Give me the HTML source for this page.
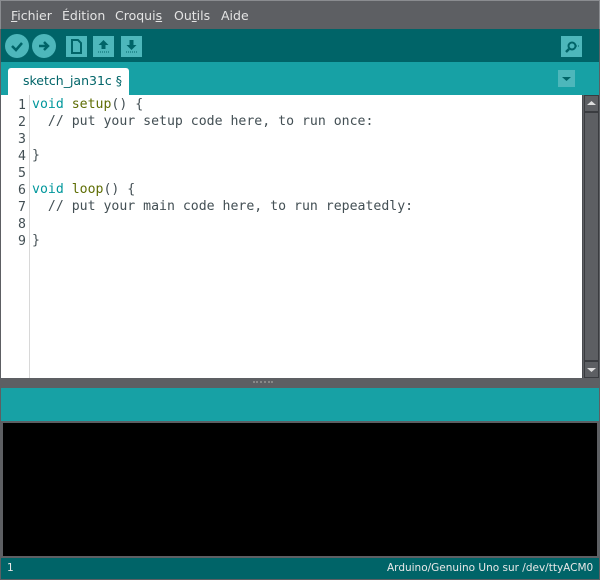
<!DOCTYPE html>
<html><head><style>
*{margin:0;padding:0;box-sizing:border-box}
body{width:600px;height:580px;background:#5d5f63;position:relative;overflow:hidden;font-family:"DejaVu Sans","Liberation Sans",sans-serif}
.abs{position:absolute}
#menu{left:0;top:0;width:600px;height:29px;background:#5d5f63;border-top:1px solid #8a8c90;border-left:1px solid #8a8c90;border-right:1px solid #8a8c90}
#menu span{position:absolute;top:7px;font-size:12.5px;color:#e4e4e4;white-space:nowrap}
#tool{left:1px;top:29px;width:598px;height:33px;background:#006468}
.circ{position:absolute;top:5px;width:24px;height:24px;border-radius:50%;background:#4db7bb}
.sq{position:absolute;top:7px;width:21px;height:21px;background:#4db7bb}
#tabs{left:1px;top:62px;width:598px;height:33px;background:#17a1a5}
#tab{left:8px;top:68px;width:121px;height:27px;background:#fff;border-radius:3px 3px 0 0;font-size:12.5px;color:#006468;padding:5px 0 0 15px;white-space:nowrap}
#ed{left:1px;top:95px;width:581px;height:283px;background:#fff}
#gut{left:1px;top:95px;width:29px;height:283px;border-right:1px solid #d8d8d8;background:#fff}
pre{font-family:"DejaVu Sans Mono","Liberation Mono",monospace;font-size:13.2px;line-height:17px;color:#434f54}
.k{color:#00979c}.f{color:#5e6d03}
#sb{left:582px;top:95px;width:17px;height:283px;background:#5d5f63;border-left:1px solid #4a4c50}
#div{left:1px;top:378px;width:598px;height:10px;background:#5d5f63}
#teal{left:1px;top:388px;width:598px;height:33px;background:#17a1a5}
#con{left:1px;top:421px;width:598px;height:137px;background:#000;border:2px solid #5d5f63}
#stat{left:1px;top:558px;width:598px;height:21px;background:#006468;font-size:10.5px;color:#e8e8e8;white-space:nowrap}
</style></head><body>
<div id="menu" class="abs">
<span style="left:10px"><u>F</u>ichier</span>
<span style="left:61px">Édition</span>
<span style="left:114px">Croqui<u>s</u></span>
<span style="left:173px">Ou<u>t</u>ils</span>
<span style="left:220px">Aide</span>
</div>
<div id="tool" class="abs">
<div class="circ" style="left:4px"><svg width="24" height="24"><path d="M7 12l4 4 6-7" stroke="#006468" stroke-width="2.5" fill="none"/></svg></div>
<div class="circ" style="left:31px"><svg width="24" height="24"><path d="M7 12h8M12 8l4 4-4 4" stroke="#006468" stroke-width="2.5" fill="none"/></svg></div>
<div class="sq" style="left:65px"><svg width="21" height="21"><path d="M6 4h6l3 3v10H6z" fill="none" stroke="#006468" stroke-width="2"/></svg></div>
<div class="sq" style="left:92px"><svg width="21" height="21"><path d="M10.5 4l5 5h-3v4h-4V9h-3z" fill="#006468"/><path d="M5 16h11" stroke="#006468" stroke-dasharray="1 1"/></svg></div>
<div class="sq" style="left:120px"><svg width="21" height="21"><path d="M10.5 14l5-5h-3V4h-4v5h-3z" fill="#006468"/><path d="M5 16h11" stroke="#006468" stroke-dasharray="1 1"/></svg></div>
<div class="sq" style="left:560px"><svg width="21" height="21"><circle cx="11" cy="10" r="3.5" fill="none" stroke="#006468" stroke-width="2"/><path d="M8 13l-3 3" stroke="#006468" stroke-width="2.5"/><path d="M15 10h3" stroke="#006468" stroke-dasharray="1 1"/></svg></div>
</div>
<div id="tabs" class="abs"><div class="abs" style="left:557px;top:8px;width:17px;height:17px;background:#4db7bb"><svg width="17" height="17"><path d="M4 7h9l-4.5 4z" fill="#006468"/></svg></div></div>
<div id="tab" class="abs">sketch_jan31c §</div>
<div id="ed" class="abs"></div>
<div id="gut" class="abs"><pre style="text-align:right;padding:2px 3px 0 0;color:#434f54">1
2
3
4
5
6
7
8
9</pre></div>
<pre class="abs" style="left:32px;top:96px"><span class="k">void</span> <span class="f">setup</span>() {
  // put your setup code here, to run once:

}

<span class="k">void</span> <span class="f">loop</span>() {
  // put your main code here, to run repeatedly:

}</pre>
<div id="sb" class="abs">
<div class="abs" style="left:1px;top:0;width:15px;height:17px;border:1px solid #3a3c40;background:#5d5f63"><svg width="13" height="15"><path d="M2 9h9l-4.5-4z" fill="#ddd"/></svg></div>
<div class="abs" style="left:1px;top:17px;width:15px;height:249px;border:1px solid #3a3c40"></div>
<div class="abs" style="left:1px;top:266px;width:15px;height:17px;border:1px solid #3a3c40"><svg width="13" height="15"><path d="M2 6h9l-4.5 4z" fill="#ddd"/></svg></div>
</div>
<div id="div" class="abs"><div class="abs" style="left:252px;top:3px;width:20px;height:3px;border-top:2px dotted #888"></div></div>
<div id="teal" class="abs"></div>
<div id="con" class="abs"></div>
<div id="stat" class="abs"><span class="abs" style="left:6px;top:4px">1</span><span class="abs" style="left:386px;top:4px">Arduino/Genuino Uno sur /dev/ttyACM0</span></div>
</body></html>
